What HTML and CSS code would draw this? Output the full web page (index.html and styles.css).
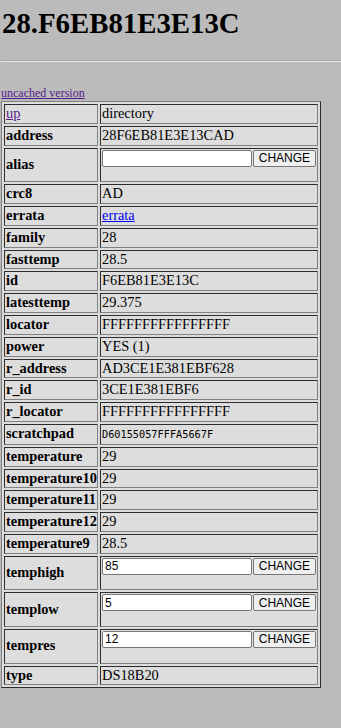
FILE: index.html
```html
<!DOCTYPE html>
<html>
<head>
<meta charset="utf-8">
<title>28.F6EB81E3E13C</title>
<link rel="stylesheet" href="styles.css">
</head>
<body>
<h1 class="title">28.F6EB81E3E13C</h1>
<hr class="rule">
<div class="uncached"><a href="#">uncached version</a></div>
<table class="props">
<tr><td class="key"><a class="visited" href="#">up</a></td><td>directory</td></tr>
<tr><td class="key"><b>address</b></td><td>28F6EB81E3E13CAD</td></tr>
<tr><td class="key"><b>alias</b></td><td><form class="edit"><input class="field" type="text" value=""><button class="change" type="button">CHANGE</button></form></td></tr>
<tr><td class="key"><b>crc8</b></td><td>AD</td></tr>
<tr><td class="key"><b>errata</b></td><td><a class="link" href="#">errata</a></td></tr>
<tr><td class="key"><b>family</b></td><td>28</td></tr>
<tr><td class="key"><b>fasttemp</b></td><td>28.5</td></tr>
<tr><td class="key"><b>id</b></td><td>F6EB81E3E13C</td></tr>
<tr><td class="key"><b>latesttemp</b></td><td>29.375</td></tr>
<tr><td class="key"><b>locator</b></td><td>FFFFFFFFFFFFFFFF</td></tr>
<tr><td class="key"><b>power</b></td><td>YES (1)</td></tr>
<tr><td class="key"><b>r_address</b></td><td>AD3CE1E381EBF628</td></tr>
<tr><td class="key"><b>r_id</b></td><td>3CE1E381EBF6</td></tr>
<tr><td class="key"><b>r_locator</b></td><td>FFFFFFFFFFFFFFFF</td></tr>
<tr><td class="key"><b>scratchpad</b></td><td><span class="mono">D60155057FFFA5667F</span></td></tr>
<tr><td class="key"><b>temperature</b></td><td>29</td></tr>
<tr><td class="key"><b>temperature10</b></td><td>29</td></tr>
<tr><td class="key"><b>temperature11</b></td><td>29</td></tr>
<tr><td class="key"><b>temperature12</b></td><td>29</td></tr>
<tr><td class="key"><b>temperature9</b></td><td>28.5</td></tr>
<tr><td class="key"><b>temphigh</b></td><td><form class="edit"><input class="field" type="text" value="85"><button class="change" type="button">CHANGE</button></form></td></tr>
<tr><td class="key"><b>templow</b></td><td><form class="edit"><input class="field" type="text" value="5"><button class="change" type="button">CHANGE</button></form></td></tr>
<tr><td class="key"><b>tempres</b></td><td><form class="edit"><input class="field" type="text" value="12"><button class="change" type="button">CHANGE</button></form></td></tr>
<tr><td class="key"><b>type</b></td><td>DS18B20</td></tr>
</table>
</body>
</html>
```
FILE: styles.css
```css
html {
  background: #bbbbbb;
}

body {
  margin: 0 0 0 1px;
  font-family: "Liberation Serif", "Times New Roman", serif;
  font-size: 14.4px;
  color: #000;
}

.title {
  margin: 7px 0 0;
  padding-left: 1px;
  font-size: 28.8px;
  font-weight: bold;
  line-height: 33px;
}

.rule {
  margin: 20px 0 0;
  height: 0;
  border: 0;
  border-top: 1px solid #a3a3a3;
  border-bottom: 1px solid #e8e8e8;
}

.uncached {
  margin-top: 23.5px;
  font-size: 12px;
  line-height: 14px;
}

.uncached a,
.visited {
  color: #551a8b;
}

.link {
  color: #0000ee;
}

.props {
  margin-top: 1.5px;
  width: 319.5px;
  table-layout: fixed;
  border: 1px outset #808080;
  border-spacing: 2px;
  background: #dddddd;
}

.props td {
  border: 1px inset #808080;
  padding: 1px;
  line-height: 15.8px;
  white-space: nowrap;
  vertical-align: middle;
}

.props td.key {
  width: 90px;
}

.mono {
  font-family: "DejaVu Sans Mono", "Liberation Mono", monospace;
  font-size: 10.25px;
}

.edit {
  display: flex;
  gap: 1.3px;
  margin: 0 0 13.6px;
}

.field {
  box-sizing: border-box;
  width: 150px;
  height: 17px;
  margin: 0;
  padding: 0 2px;
  border: 1px solid #767676;
  border-radius: 2px;
  background: #fff;
  font-family: "Liberation Sans", Arial, sans-serif;
  font-size: 12px;
  color: #000;
}

.change {
  box-sizing: border-box;
  width: 63.5px;
  height: 17px;
  margin: 0;
  padding: 0;
  border: 1px solid #767676;
  border-radius: 2px;
  background: #efefef;
  font-family: "Liberation Sans", Arial, sans-serif;
  font-size: 12px;
  color: #000;
}
```
